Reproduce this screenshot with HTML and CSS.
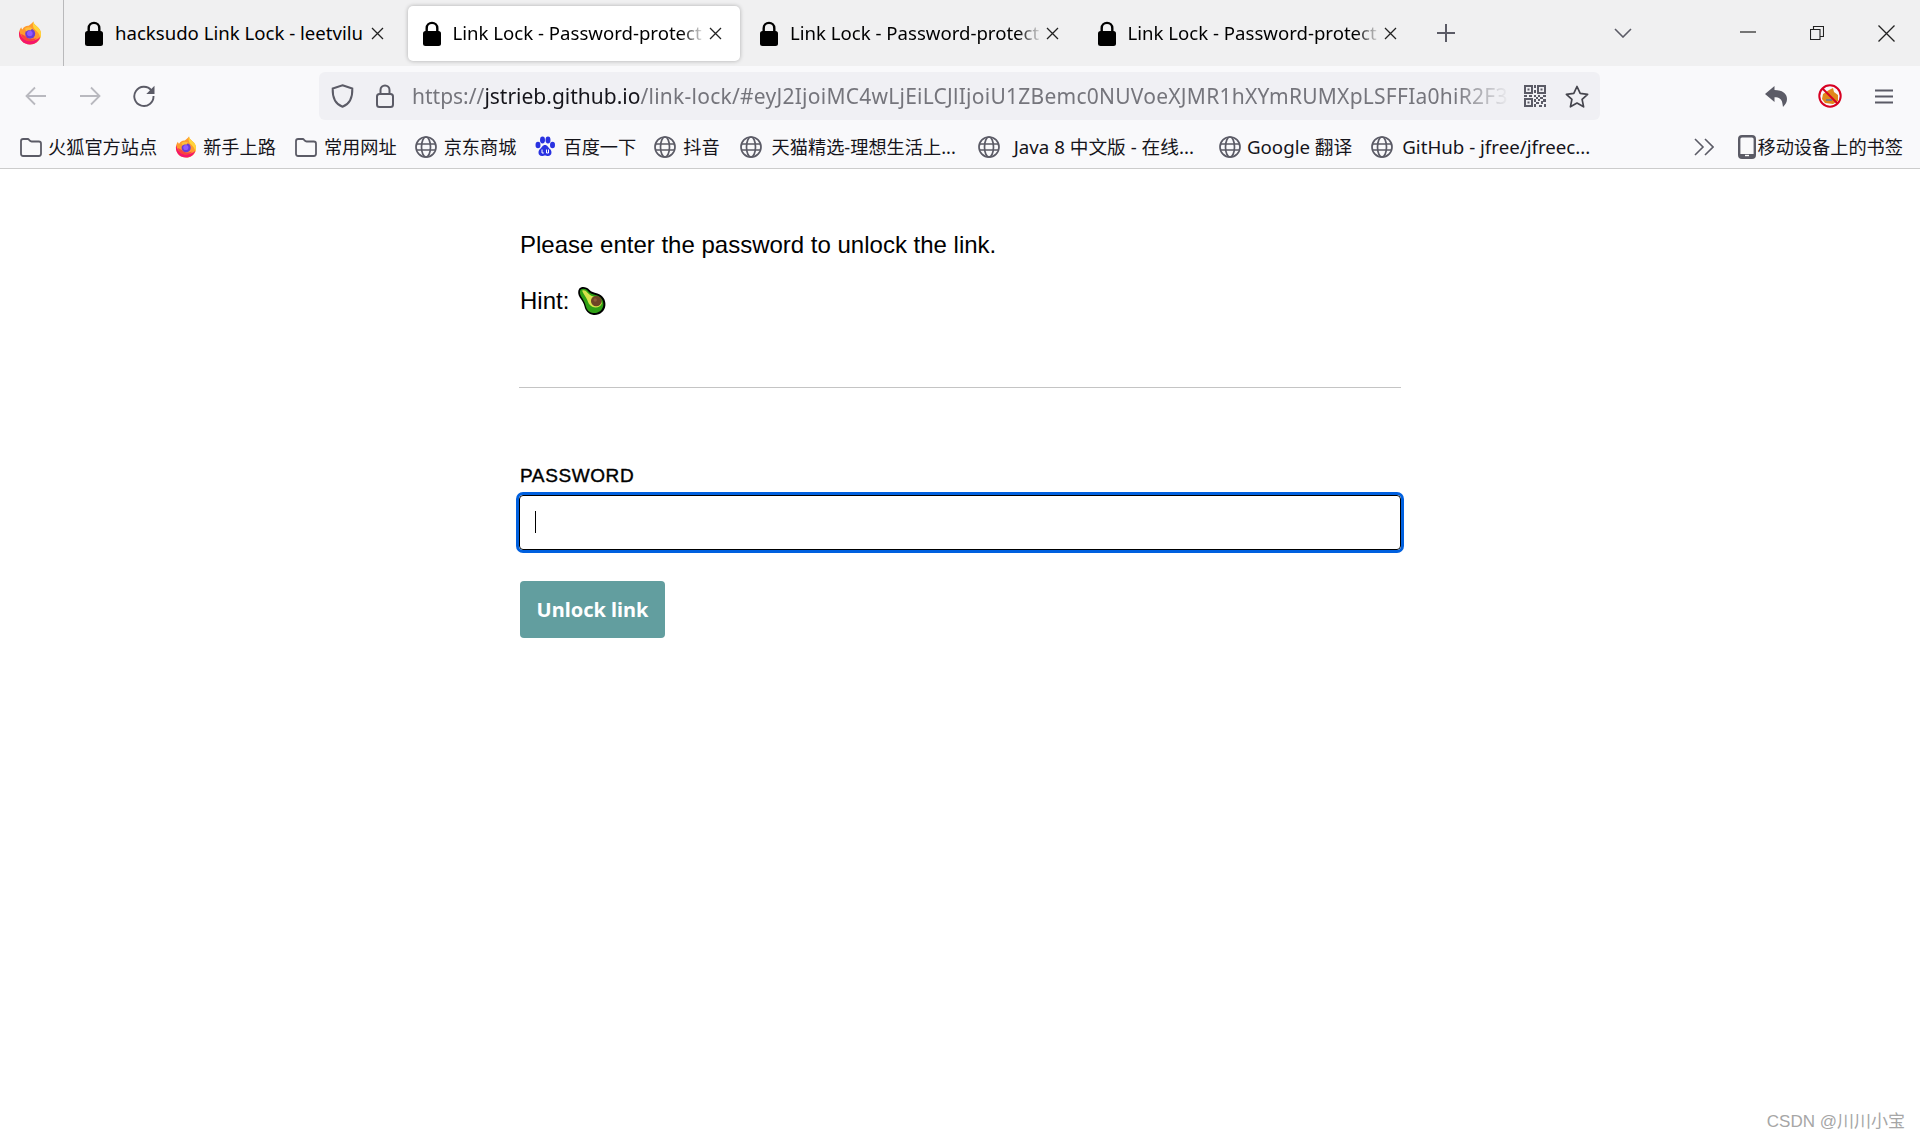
FILE: index.html
```html
<!DOCTYPE html>
<html lang="zh-CN">
<head>
<meta charset="utf-8">
<title>Link Lock - Password-protected links</title>
<link rel="stylesheet" href="styles.css">
</head>
<body>
<svg class="defs" width="0" height="0" aria-hidden="true">
  <defs>
    <symbol id="fx" viewBox="0 0 24 24">
      <path d="M12 23.5C5.6 23.5 1 18.8 1 12.8c0-2.6.8-4.9 2.2-6.6.2 1 .6 1.7 1.2 2.2C5.6 6 8 4.6 10.600 4.800 12 3.800 13.800 2.700 15.300 .6c.3 2.300 1.700 3.400 3.700 5 2.800 2.300 4 4.800 4 7.400 0 6-4.700 10.500-11 10.500z" fill="#ff9a2e"/>
      <path d="M15.300 .6c.3 2.300 1.700 3.400 3.700 5 2.800 2.300 4 4.800 4 7.400 0 1.500-.3 2.900-.8 4.100-.5-3.800-2.800-6.500-5.300-8.500-2-1.700-2.500-4.600-1.600-8.500z" fill="#ffd53a"/>
      <path d="M12 23.500C5.600 23.500 1 18.800 1 12.800c0-1 .1-2 .4-2.800 1 5.700 5.400 10 11 10 4 0 7.600-1.600 9.800-3.900C20.800 20.700 16.800 23.500 12 23.500z" fill="#f5156c"/>
      <path d="M3 13c1 5 4.600 7.300 9 7.300 3 0 5.500-1.300 6.800-3.500-1 .8-2.300 1-3.300.8-1.800.9-4.500.6-6.200-1-1.700-1.400-2.400-2.200-6.300-3.600z" fill="#f9413f"/>
      <circle cx="12.200" cy="12.800" r="5" fill="#6a3bd6"/>
      <circle cx="11.800" cy="12.500" r="2.800" fill="#9059ff"/>
      <path d="M7 7.500c2-1.500 5-1.800 7.300-.3l-1.600 2.200c-1.600-.5-3.500-.1-4.500 1.100z" fill="#ffbd3a"/>
    </symbol>
    <symbol id="lock" viewBox="0 0 18 25">
      <path d="M3.700 11V7.200a5.300 5.300 0 0 1 10.600 0V11" fill="none" stroke="#000" stroke-width="2.400"/>
      <rect x="0" y="10" width="18" height="15" rx="2.500" fill="#000"/>
    </symbol>
    <symbol id="x" viewBox="0 0 13 13">
      <path d="M1 1l11 11M12 1L1 12" fill="none" stroke="#222" stroke-width="1.300"/>
    </symbol>
    <symbol id="folder" viewBox="0 0 22 19">
      <path d="M1 3.200C1 2 2 1 3.200 1h4.600c.9 0 1.300 1 2 1.700.5.600 1 .8 1.800.8h7.200C20 3.500 21 4.500 21 5.700v10.100c0 1.200-1 2.200-2.200 2.200H3.200C2 18 1 17 1 15.800z" fill="none" stroke="#5b5b66" stroke-width="1.800"/>
    </symbol>
    <symbol id="globe" viewBox="0 0 22 22">
      <g fill="none" stroke="#5b5b66" stroke-width="1.700">
        <circle cx="11" cy="11" r="10"/>
        <ellipse cx="11" cy="11" rx="4.500" ry="10"/>
        <path d="M1.500 8h19M1.500 14h19"/>
      </g>
    </symbol>
  </defs>
</svg>

<header class="browser">
  <div class="tabbar">
    <div class="app-btn"><svg class="ic-fx"><use href="#fx"/></svg></div>
    <div class="tabs">
      <div class="tab">
        <svg class="ic-lock"><use href="#lock"/></svg>
        <span class="tab-title">hacksudo Link Lock - leetvilu</span>
        <svg class="ic-x"><use href="#x"/></svg>
      </div>
      <div class="tab tab-active">
        <svg class="ic-lock"><use href="#lock"/></svg>
        <span class="tab-title tab-fade">Link Lock - Password-protect</span>
        <svg class="ic-x"><use href="#x"/></svg>
      </div>
      <div class="tab">
        <svg class="ic-lock"><use href="#lock"/></svg>
        <span class="tab-title tab-fade">Link Lock - Password-protect</span>
        <svg class="ic-x"><use href="#x"/></svg>
      </div>
      <div class="tab">
        <svg class="ic-lock"><use href="#lock"/></svg>
        <span class="tab-title tab-fade">Link Lock - Password-protect</span>
        <svg class="ic-x"><use href="#x"/></svg>
      </div>
    </div>
    <svg class="ic-plus" viewBox="0 0 18 18"><path d="M9 0v18M0 9h18" fill="none" stroke="#5b5b66" stroke-width="2"/></svg>
    <svg class="ic-chev" viewBox="0 0 18 10"><path d="M1 1l8 8 8-8" fill="none" stroke="#5b5b66" stroke-width="1.600"/></svg>
    <div class="winctl">
      <svg class="ic-min" viewBox="0 0 16 2"><path d="M0 1h16" stroke="#222" stroke-width="1.200"/></svg>
      <svg class="ic-restore" viewBox="0 0 14 14"><path d="M.5 3.500h9.500v10H.5zM3.500 3.500V.5h10v10H10" fill="none" stroke="#222" stroke-width="1.100"/></svg>
      <svg class="ic-close" viewBox="0 0 17 17"><path d="M.5 .5l16 16M16.500 .5l-16 16" fill="none" stroke="#222" stroke-width="1.300"/></svg>
    </div>
  </div>

  <div class="toolbar">
    <svg class="ic-nav" viewBox="0 0 22 20"><path d="M21 10H2M10 1.500L1.500 10l8.500 8.500" fill="none" stroke="#b9b9bf" stroke-width="1.800"/></svg>
    <svg class="ic-nav ic-forward" viewBox="0 0 22 20"><path d="M1 10h19M12 1.500l8.500 8.500-8.500 8.500" fill="none" stroke="#b9b9bf" stroke-width="1.800"/></svg>
    <svg class="ic-reload" viewBox="0 0 22 22"><path d="M18.500 5.500A9.600 9.600 0 1 0 20.500 11" fill="none" stroke="#5b5b66" stroke-width="1.900"/><path d="M21.500 .8v8.200h-8.200z" fill="#5b5b66"/></svg>
    <div class="urlbar">
      <svg class="ic-shield" viewBox="0 0 23 24"><path d="M11.500 1.200l9.800 3.300c.3 8.300-1.800 15.300-9.800 18.300C3.500 19.800 1.400 12.800 1.700 4.500z" fill="none" stroke="#5b5b66" stroke-width="2"/></svg>
      <svg class="ic-padlock" viewBox="0 0 18 24"><path d="M4.500 10V6a4.500 4.500 0 0 1 9 0v4" fill="none" stroke="#5b5b66" stroke-width="2"/><rect x="1" y="10" width="16" height="13" rx="2.500" fill="none" stroke="#5b5b66" stroke-width="2"/></svg>
      <div class="url"><span class="url-scheme">https://</span><span class="url-host">jstrieb.github.io</span><span class="url-rest">/link-lock/#eyJ2IjoiMC4wLjEiLCJlIjoiU1ZBemc0NUVoeXJMR1hXYmRUMXpLSFFIa0hiR2F3</span></div>
      <svg class="ic-qr" viewBox="0 0 22 22">
        <g fill="#5b5b66"><path d="M0 0h9v9H0zM2 2v5h5V2zM13 0h9v9h-9zM15 2v5h5V2zM0 13h9v9H0zM2 15v5h5v-5z" fill-rule="evenodd"/>
        <path d="M3.500 3.500h2v2h-2zM16.500 3.500h2v2h-2zM3.500 16.500h2v2h-2zM10 0h2v3h-2zM10 5h2v3h-2zM0 10h3v2H0zM5 10h3v2H5zM10 10h2v2h-2zM14 10h2v2h-2zM19 10h3v2h-3zM12 12h2v2h-2zM16 12h3v2h-3zM10 14h2v3h-2zM14 14h2v2h-2zM19 14h3v3h-3zM12 17h3v2h-3zM17 16h2v3h-2zM10 19h2v3h-2zM15 20h3v2h-3zM20 19h2v3h-2z"/></g>
      </svg>
      <svg class="ic-star" viewBox="0 0 24 23"><path d="M12 1.500l3.200 6.900 7.400.9-5.500 5.100 1.500 7.400-6.600-3.700-6.600 3.700 1.500-7.400L1.400 9.300l7.400-.9z" fill="none" stroke="#45454d" stroke-width="1.700" stroke-linejoin="round"/></svg>
    </div>
    <svg class="ic-undo" viewBox="0 0 22 21"><path d="M9.500 0L0 8l9.500 8v-4.700c4.500 0 7.500 1.700 8 6.700l.5 3c2.500-2.500 4-5 4-8 0-5.500-5-9-12.500-9z" fill="#5b5b66"/></svg>
    <svg class="ic-block" viewBox="0 0 24 24">
      <path d="M5 10l6-4 4-2 1 4 4 3 0 6-5 3-8-1-3-4z" fill="#e0881a"/>
      <path d="M8 15h6v2H8z" fill="#7a7a80"/>
      <circle cx="12" cy="12" r="10.700" fill="none" stroke="#d70022" stroke-width="2"/>
      <path d="M4.500 4.500l15 15" stroke="#d70022" stroke-width="2"/>
    </svg>
    <svg class="ic-menu" viewBox="0 0 18 15"><path d="M0 1.500h18M0 7.500h18M0 13.500h18" stroke="#5b5b66" stroke-width="2"/></svg>
  </div>

  <nav class="bookmarks">
    <a class="bm bm-1"><svg class="bm-ic"><use href="#folder"/></svg><span>火狐官方站点</span></a>
    <a class="bm bm-2"><svg class="bm-ic-lg"><use href="#fx"/></svg><span>新手上路</span></a>
    <a class="bm bm-3"><svg class="bm-ic"><use href="#folder"/></svg><span>常用网址</span></a>
    <a class="bm bm-4"><svg class="bm-ic-lg"><use href="#globe"/></svg><span>京东商城</span></a>
    <a class="bm bm-5">
      <svg class="bm-ic-lg" viewBox="0 0 22 22"><g fill="#2932e1"><ellipse cx="4" cy="9" rx="2.500" ry="3.300"/><ellipse cx="8.500" cy="4" rx="2.500" ry="3.400"/><ellipse cx="14" cy="4" rx="2.500" ry="3.400"/><ellipse cx="18.500" cy="9" rx="2.500" ry="3.300"/><path d="M11 9c2.500 0 3 2.500 5 4s2.500 7-2 7c-1.300 0-2-.6-3-.6s-1.700.6-3 .6c-4.500 0-4-5.500-2-7s2.500-4 5-4z"/></g><path d="M8 13.500v3.500h1.800M12.500 13.500v3.500h2v-3.500" fill="none" stroke="#fff" stroke-width="1"/></svg>
      <span>百度一下</span></a>
    <a class="bm bm-6"><svg class="bm-ic-lg"><use href="#globe"/></svg><span>抖音</span></a>
    <a class="bm bm-7"><svg class="bm-ic-lg"><use href="#globe"/></svg><span>天猫精选-理想生活上...</span></a>
    <a class="bm bm-8"><svg class="bm-ic-lg"><use href="#globe"/></svg><span>Java 8 中文版 - 在线...</span></a>
    <a class="bm bm-9"><svg class="bm-ic-lg"><use href="#globe"/></svg><span>Google 翻译</span></a>
    <a class="bm bm-10"><svg class="bm-ic-lg"><use href="#globe"/></svg><span>GitHub - jfree/jfreec...</span></a>
    <svg class="ic-more" viewBox="0 0 20 18"><path d="M1 1l8 8-8 8M11 1l8 8-8 8" fill="none" stroke="#5b5b66" stroke-width="1.600"/></svg>
    <a class="bm bm-mobile">
      <svg class="ic-phone" viewBox="0 0 18 24"><rect x="1.200" y="1.200" width="15.600" height="21.600" rx="2.800" fill="none" stroke="#5b5b66" stroke-width="2.400"/><path d="M1.500 19h15v2.500a1 1 0 0 1-1 1h-13a1 1 0 0 1-1-1z" fill="#5b5b66"/><rect x="7" y="19.800" width="4" height="1.400" fill="#fff"/></svg>
      <span>移动设备上的书签</span></a>
  </nav>
</header>

<main class="page">
  <p class="msg">Please enter the password to unlock the link.</p>
  <p class="msg hint">Hint:
    <svg class="avocado" viewBox="0 0 28 28" role="img" aria-label="avocado">
      <path d="M2 2.500C4 0 9 .5 11.500 3.500c2 2.200 4 2.500 7.500 3.500 5 1.500 8 6 7.500 11-.5 6-5.500 9.500-11 9-5-.5-7.500-3.800-8.500-8-.7-3-2-5-4.500-8.500C1 8 .5 4.800 2 2.500z" fill="#000"/>
      <path d="M3.300 3.500C5 1.800 8.500 2.300 10.300 4.700c2 2.500 4.300 3 8 4 4 1.200 6.700 5 6.300 9-.5 5-4.800 8-9.300 7.500-4.200-.4-6.300-3.300-7.200-6.800-.7-3-2-5.200-4.200-8.500-1.100-1.800-1.700-4.500-.600-6.400z" fill="#2fa015"/>
      <path d="M4.800 4.500c1.400-.9 3.300-.4 4.800 1.600 2.200 2.800 5 3.500 8.300 4.500 3 .9 5.200 3.200 5.300 5.800-1.300 3.500-5.500 4.500-9 3-3-1.400-3.700-4-4.700-6.500-1-2.700-3.500-5-4.700-8.400z" fill="#d6e24b"/>
      <circle cx="18" cy="14" r="5" fill="#6e4426"/>
      <circle cx="17" cy="13" r="1.600" fill="#8c5a36"/>
    </svg>
  </p>
  <hr class="rule">
  <form class="form">
    <label class="label" for="password">PASSWORD</label>
    <div class="field">
      <input class="input" id="password" type="password">
      <span class="caret"></span>
    </div>
    <button class="btn" type="button">Unlock link</button>
  </form>
</main>

<div class="watermark">CSDN @川川小宝</div>
</body>
</html>
```
FILE: styles.css
```css
* { box-sizing: border-box; }

html, body {
  margin: 0;
  height: 1140px;
  overflow: hidden;
  background: #fff;
}

body {
  position: relative;
  font-family: "Noto Sans", "Noto Sans CJK SC", sans-serif;
  color: #000;
}

.defs { position: absolute; }

svg { display: block; flex: none; }

/* browser chrome */
.browser {
  height: 169px;
  background: #f9f9fb;
  border-bottom: 1px solid #ccc;
}

.tabbar {
  height: 66px;
  display: flex;
  align-items: center;
  background: #f0f0f1;
}

.app-btn {
  width: 64px;
  height: 66px;
  display: flex;
  align-items: center;
  padding-left: 18px;
  border-right: 1px solid #b9b9bb;
}

.ic-fx { width: 24px; height: 24px; }

.tabs { display: flex; margin-left: 6px; }

.tab {
  width: 332px;
  height: 55px;
  margin-top: 1px;
  margin-right: 5.5px;
  padding-left: 15px;
  display: flex;
  align-items: center;
  border-radius: 5px;
  font-size: 18.6px;
}

.tab-active {
  background: #fff;
  box-shadow: 0 0 4px rgba(0, 0, 0, .28);
}

.ic-lock { width: 18px; height: 25px; margin-top: -1px; }

.tab-title {
  width: 256px;
  margin-left: 12px;
  margin-top: -2px;
  overflow: hidden;
  white-space: nowrap;
  line-height: 26px;
}

.tab-fade {
  -webkit-mask-image: linear-gradient(90deg, #000 228px, transparent 252px);
  mask-image: linear-gradient(90deg, #000 228px, transparent 252px);
}

.ic-x { width: 13px; height: 13px; }

.ic-plus { width: 18px; height: 18px; margin-left: 17px; }
.ic-chev { width: 18px; height: 10px; margin-left: 159px; margin-top: -1px; }

.winctl {
  display: flex;
  align-items: center;
  margin-left: 108px;
}
.ic-min { width: 16px; height: 2px; margin-top: -2px; }
.ic-restore { width: 14px; height: 14px; margin-left: 54px; margin-top: -1px; }
.ic-close { width: 17px; height: 17px; margin-left: 54px; }

/* navigation toolbar */
.toolbar {
  height: 54px;
  display: flex;
  align-items: center;
  padding-top: 6px;
}

.ic-nav { width: 22px; height: 20px; margin-left: 25px; }
.ic-forward { margin-left: 32px; }
.ic-reload { width: 22px; height: 22px; margin-left: 32px; }

.urlbar {
  width: 1281px;
  height: 48px;
  margin-left: 164px;
  padding-left: 12px;
  display: flex;
  align-items: center;
  background: #f0f0f4;
  border-radius: 6px;
}

.ic-shield { width: 23px; height: 24px; }
.ic-padlock { width: 18px; height: 24px; margin-left: 22px; }

.url {
  width: 1098px;
  margin-left: 18px;
  overflow: hidden;
  white-space: nowrap;
  font-size: 21px;
  line-height: 30px;
  -webkit-mask-image: linear-gradient(90deg, #000 95%, transparent 100%);
  mask-image: linear-gradient(90deg, #000 95%, transparent 100%);
}
.url-scheme, .url-rest { color: #75757c; }
.url-rest { letter-spacing: .25px; }
.url-host { color: #15141a; }

.ic-qr { width: 22px; height: 22px; margin-left: 14px; }
.ic-star { width: 24px; height: 23px; margin-left: 19px; }

.ic-undo { width: 22px; height: 21px; margin-left: 165px; }
.ic-block { width: 24px; height: 24px; margin-left: 31px; }
.ic-menu { width: 18px; height: 15px; margin-left: 33px; }

/* bookmarks toolbar */
.bookmarks {
  height: 48px;
  display: flex;
  align-items: center;
  padding-left: 20px;
  padding-top: 6px;
  font-size: 18.2px;
  color: #15141a;
}

.bm {
  display: flex;
  align-items: center;
  gap: 7px;
  margin-right: 18px;
  white-space: nowrap;
  line-height: 26px;
}

.bm-1, .bm-2 { gap: 6px; }
.bm-2 { margin-right: 19px; }
.bm-6 { margin-right: 20px; }
.bm-7 { gap: 10px; margin-right: 22px; }
.bm-8 { gap: 14px; margin-right: 25px; font-size: 18.7px; }
.bm-9 { gap: 6px; margin-right: 19px; font-size: 18.7px; }
.bm-10 { gap: 9px; margin-right: 0; font-size: 18.7px; }

.bm-ic { width: 22px; height: 19px; }
.bm-ic-lg { width: 22px; height: 22px; }

.ic-more { width: 20px; height: 18px; margin-left: auto; margin-right: 24px; }
.ic-phone { width: 18px; height: 24px; }
.bm-mobile { gap: 1px; margin-right: 17px; }

/* page */
.page {
  width: 882px;
  margin: 0 auto;
  padding-top: 60px;
  font-family: "Liberation Sans", Arial, sans-serif;
}

.msg {
  margin: 0 0 24px;
  padding-left: 1px;
  font-size: 24px;
  line-height: 32px;
}

.hint {
  display: flex;
  align-items: center;
  gap: 8px;
  margin-bottom: 0;
}

.avocado { width: 30px; height: 30px; }

.rule {
  height: 1px;
  margin: 70px 0 0;
  border: 0;
  background: #c4c4c4;
}

.form { display: block; margin-top: 76px; }

.label {
  display: block;
  height: 24px;
  padding-left: 1px;
  font-size: 19px;
  line-height: 24px;
  font-weight: 400;
  -webkit-text-stroke: .4px #000;
  letter-spacing: .6px;
}

.field {
  position: relative;
  margin-top: 7px;
  height: 55px;
}

.input {
  display: block;
  width: 100%;
  height: 55px;
  padding: 0 15px;
  background: #fff;
  border: 1px solid #000;
  border-radius: 4px;
  outline: 3px solid #0060df;
  outline-offset: 0;
  caret-color: transparent;
}

.caret {
  position: absolute;
  left: 16px;
  top: 16px;
  width: 1px;
  height: 22px;
  background: #000;
}

.btn {
  display: block;
  width: 145px;
  height: 57px;
  margin: 31px 0 0 1px;
  padding: 0;
  background: #629e9f;
  border: 0;
  border-radius: 4px;
  color: #fff;
  font-family: "Noto Sans", sans-serif;
  font-size: 20px;
  font-weight: 700;
}

.watermark {
  position: absolute;
  right: 15px;
  bottom: 6px;
  font-family: "Liberation Sans", "Noto Sans CJK SC", sans-serif;
  font-size: 17px;
  line-height: 24px;
  color: #a6a6a6;
}
```
